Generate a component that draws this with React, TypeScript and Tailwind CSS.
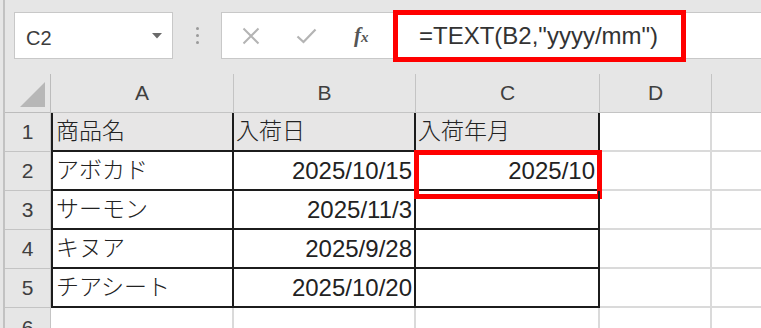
import React from 'react';

const CELL_FONT = {fontFamily: '"Liberation Sans", "Noto Sans CJK JP", sans-serif'};

const ROWS = [
    {a: '商品名', b: '入荷日', c: '入荷年月'},
    {a: 'アボカド', b: '2025/10/15', c: '2025/10'},
    {a: 'サーモン', b: '2025/11/3', c: ''},
    {a: 'キヌア', b: '2025/9/28', c: ''},
    {a: 'チアシート', b: '2025/10/20', c: ''},
];

export default function App() {
    return (
        <div className="w-[761px] h-[328px] overflow-hidden bg-[#e6e6e6] flex" style={CELL_FONT}>
            {/* left window edge */}
            <div className="w-[3px] shrink-0"/>
            <div className="w-[2px] shrink-0 bg-[#c2c2c2]"/>

            <div className="flex-1 flex flex-col">
                {/* Name box + formula bar */}
                <div className="h-[74px] pt-[12px] flex items-start shrink-0">
                    <div
                        className="ml-[9px] w-[159px] h-[47px] bg-white border border-[#c8c8c8] flex items-center justify-between pl-[11px] pr-[10px]">
                        <span className="text-[20px] text-[#3c3c3c] pt-[5px] leading-none">C2</span>
                        <svg width="10" height="6" viewBox="0 0 10 6">
                            <polygon points="0,0 10,0 5,5.5" fill="#6a6a6a"/>
                        </svg>
                    </div>
                    <div className="w-[48px] h-[47px] flex flex-col items-center justify-center gap-[4px]">
                        <div className="w-[3px] h-[3px] rounded-full bg-[#9a9a9a]"/>
                        <div className="w-[3px] h-[3px] rounded-full bg-[#9a9a9a]"/>
                        <div className="w-[3px] h-[3px] rounded-full bg-[#9a9a9a]"/>
                    </div>
                    <div className="flex-1 h-[47px] bg-white border border-r-0 border-[#c8c8c8] flex items-center">
                        <svg className="ml-[20px]" width="18" height="18" viewBox="0 0 18 18">
                            <path d="M1.5 1.5 L16.5 16.5 M16.5 1.5 L1.5 16.5" stroke="#b4b4b4" strokeWidth="2"
                                  fill="none"/>
                        </svg>
                        <svg className="ml-[36px]" width="21" height="16" viewBox="0 0 21 16">
                            <path d="M1.5 8.5 L7.5 14 L19.5 1.5" stroke="#b4b4b4" strokeWidth="2.2" fill="none"/>
                        </svg>
                        <span className="ml-[37px] w-[20px] text-[#555] italic font-bold leading-none"
                              style={{fontFamily: '"Liberation Serif", serif'}}>
                            <span className="text-[21px]">f</span><span className="text-[15px]">x</span>
                        </span>
                        <div
                            className="ml-[19px] w-[293px] h-[52px] shrink-0 border-[5px] border-[#ff0000] flex items-center pl-[21px]">
                            <span className="text-[24px] text-[#333] leading-none whitespace-nowrap">=TEXT(B2,"yyyy/mm")</span>
                        </div>
                    </div>
                </div>

                {/* Column headers */}
                <div className="h-[39px] flex shrink-0 text-[21px] text-[#3f3f3f]">
                    <div
                        className="w-[46px] shrink-0 border-r border-b border-[#bcbcbc] flex items-end justify-end p-[5px]">
                        <svg width="25" height="25" viewBox="0 0 25 25">
                            <polygon points="25,0 25,25 0,25" fill="#b7b7b7"/>
                        </svg>
                    </div>
                    {[
                        ['A', 'w-[183px]'],
                        ['B', 'w-[182px]'],
                        ['C', 'w-[184px]'],
                        ['D', 'w-[112px]'],
                    ].map(([l, w]) => (
                        <div key={l}
                             className={`${w} shrink-0 border-r border-b border-[#c4c4c4] flex items-center justify-center`}>
                            {l}
                        </div>
                    ))}
                    <div className="flex-1 border-b border-[#c4c4c4]"/>
                </div>

                {/* Rows */}
                {ROWS.map((r, i) => (
                    <div key={i} className="h-[39px] flex shrink-0 bg-white">
                        <div
                            className="w-[46px] shrink-0 bg-[#e6e6e6] border-r border-b border-[#c4c4c4] flex items-center justify-center text-[21px] text-[#3f3f3f]">
                            {i + 1}
                        </div>
                        <div
                            className={`w-[183px] shrink-0 border-l-2 border-r-2 border-b-2 border-[#1c1c1c] flex items-center pl-[3px] text-[23px] font-light text-[#222] ${i === 0 ? 'bg-[#e7e6e6]' : ''}`}>
                            {r.a}
                        </div>
                        <div
                            className={`w-[182px] shrink-0 border-r-2 border-b-2 border-[#1c1c1c] flex items-center text-[#222] ${i === 0 ? 'bg-[#e7e6e6] pl-[2px] text-[23px] font-light' : 'justify-end pr-[2px] text-[24px]'}`}>
                            {r.b}
                        </div>
                        <div
                            className={`relative w-[184px] shrink-0 border-r-2 border-b-2 border-[#1c1c1c] flex items-center text-[#222] ${i === 0 ? 'bg-[#e7e6e6] pl-[2px] text-[23px] font-light' : 'justify-end pr-[3px] text-[24px]'}`}>
                            {r.c}
                            {i === 1 && (
                                <div
                                    className="absolute left-[-2px] top-[-2px] right-[-4px] bottom-[-10px] border-[5px] border-[#ff0000]"/>
                            )}
                        </div>
                        <div className="w-[112px] shrink-0 border-r-2 border-b-2 border-[#dadada]"/>
                        <div className="flex-1 border-b-2 border-[#dadada]"/>
                    </div>
                ))}

                {/* Row 6 (cut off) */}
                <div className="h-[39px] flex shrink-0 bg-white">
                    <div
                        className="w-[46px] shrink-0 bg-[#e6e6e6] border-r border-[#c4c4c4] flex items-center justify-center text-[21px] text-[#3f3f3f]">
                        6
                    </div>
                    <div className="w-[183px] shrink-0 border-r-2 border-[#dadada]"/>
                    <div className="w-[182px] shrink-0 border-r-2 border-[#dadada]"/>
                    <div className="w-[184px] shrink-0 border-r-2 border-[#dadada]"/>
                    <div className="w-[112px] shrink-0 border-r-2 border-[#dadada]"/>
                    <div className="flex-1"/>
                </div>
            </div>
        </div>
    );
}
